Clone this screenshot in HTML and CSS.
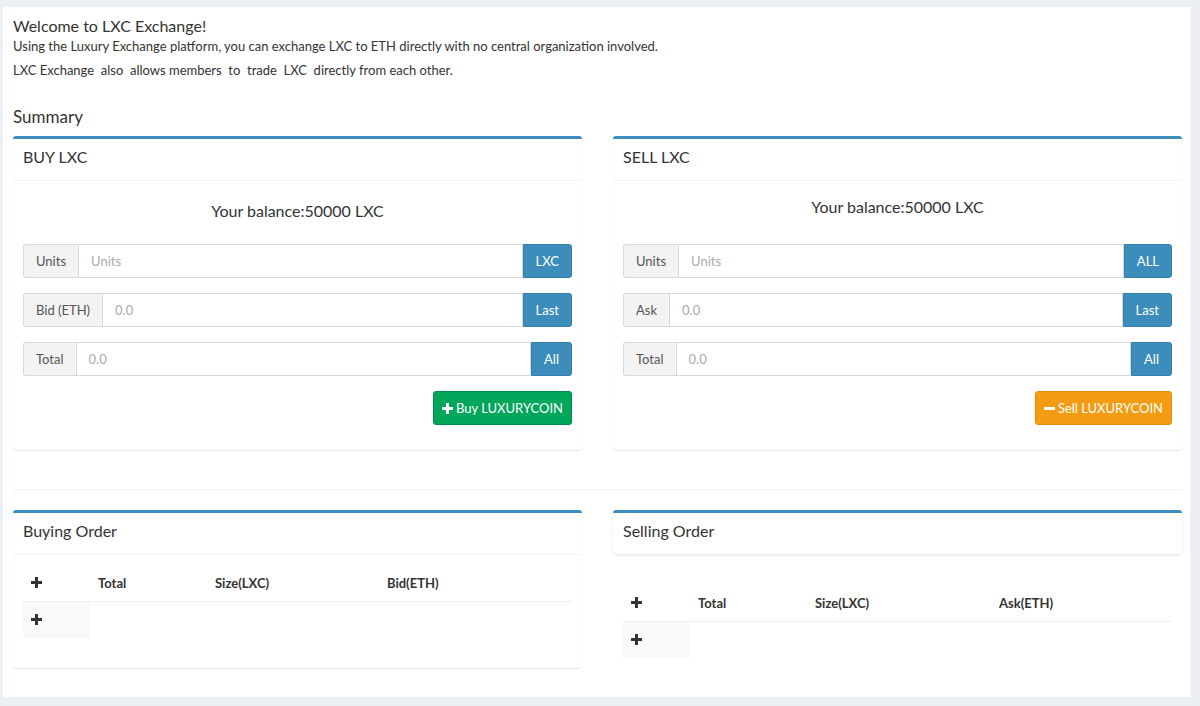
FILE: index.html
```html
<!DOCTYPE html>
<html lang="en">
<head>
  <meta charset="UTF-8" />
  <meta name="viewport" content="width=device-width, initial-scale=1" />
  <title>LXC Exchange</title>
  <link rel="stylesheet" href="styles.css">
</head>
<body>
  <div class="content">
    <h4 class="welcome">Welcome to LXC Exchange!</h4>
    <p class="intro">Using the Luxury Exchange platform, you can exchange LXC to ETH directly with no central organization involved.</p>
    <p class="intro">LXC Exchange &nbsp;also &nbsp;allows members &nbsp;to &nbsp;trade &nbsp;LXC &nbsp;directly from each other.</p>

    <h4 class="section-title">Summary</h4>

    <div class="row">
      <!-- buy side -->
      <div class="box">
        <div class="box-header"><h3>BUY LXC</h3></div>
        <div class="box-body">
          <div class="balance balance-buy">Your balance:50000 LXC</div>
          <div class="input-group">
            <span class="addon">Units</span>
            <input type="text" placeholder="Units">
            <button class="btn-addon">LXC</button>
          </div>
          <div class="input-group">
            <span class="addon">Bid (ETH)</span>
            <input type="text" placeholder="0.0">
            <button class="btn-addon">Last</button>
          </div>
          <div class="input-group">
            <span class="addon">Total</span>
            <input type="text" placeholder="0.0">
            <button class="btn-addon">All</button>
          </div>
          <div class="actions">
            <button class="btn btn-buy">
              <svg width="11" height="11" viewBox="0 0 11 11"><path d="M4 0h3v4h4v3H7v4H4V7H0V4h4z" fill="#fff"/></svg>
              Buy LUXURYCOIN
            </button>
          </div>
        </div>
      </div>

      <!-- sell side -->
      <div class="box">
        <div class="box-header"><h3>SELL LXC</h3></div>
        <div class="box-body">
          <div class="balance">Your balance:50000 LXC</div>
          <div class="input-group">
            <span class="addon">Units</span>
            <input type="text" placeholder="Units">
            <button class="btn-addon">ALL</button>
          </div>
          <div class="input-group">
            <span class="addon">Ask</span>
            <input type="text" placeholder="0.0">
            <button class="btn-addon">Last</button>
          </div>
          <div class="input-group">
            <span class="addon">Total</span>
            <input type="text" placeholder="0.0">
            <button class="btn-addon">All</button>
          </div>
          <div class="actions">
            <button class="btn btn-sell">
              <svg width="11" height="11" viewBox="0 0 11 11"><path d="M0 4h11v3H0z" fill="#fff"/></svg>
              Sell LUXURYCOIN
            </button>
          </div>
        </div>
      </div>
    </div>

    <hr class="divider">

    <div class="row">
      <div class="box">
        <div class="box-header"><h3>Buying Order</h3></div>
        <div class="box-body">
          <table class="orders">
            <thead>
              <tr>
                <th class="ctrl"><svg width="11" height="11" viewBox="0 0 11 11"><path d="M4 0h3v4h4v3H7v4H4V7H0V4h4z" fill="#333"/></svg></th>
                <th class="col-total">Total</th>
                <th class="col-size">Size(LXC)</th>
                <th>Bid(ETH)</th>
              </tr>
            </thead>
            <tbody>
              <tr>
                <td class="ctrl"><svg width="11" height="11" viewBox="0 0 11 11"><path d="M4 0h3v4h4v3H7v4H4V7H0V4h4z" fill="#333"/></svg></td>
                <td></td><td></td><td></td>
              </tr>
            </tbody>
          </table>
        </div>
      </div>

      <div class="col">
        <div class="box box-flat">
          <div class="box-header"><h3>Selling Order</h3></div>
        </div>
        <table class="orders orders-loose">
          <thead>
            <tr>
              <th class="ctrl"><svg width="11" height="11" viewBox="0 0 11 11"><path d="M4 0h3v4h4v3H7v4H4V7H0V4h4z" fill="#333"/></svg></th>
              <th class="col-total">Total</th>
              <th class="col-size">Size(LXC)</th>
              <th>Ask(ETH)</th>
            </tr>
          </thead>
          <tbody>
            <tr>
              <td class="ctrl"><svg width="11" height="11" viewBox="0 0 11 11"><path d="M4 0h3v4h4v3H7v4H4V7H0V4h4z" fill="#333"/></svg></td>
              <td></td><td></td><td></td>
            </tr>
          </tbody>
        </table>
      </div>
    </div>
  </div>
</body>
</html>
```

FILE: styles.css
```css
html,
body {
  margin: 0;
  background-color: #ecf0f5;
}

body {
  padding: 7px 10px 9px 3px;
  font-family: "Lato", "Open Sans", sans-serif;
  font-size: 14px;
  line-height: 1.42857;
  color: #333;
}

.content {
  background-color: #fff;
  padding: 9px 8px 30px 10px;
  height: 651px;
}

.welcome {
  margin: 0;
  font-size: 16px;
  font-weight: 400;
  line-height: 20px;
}

.intro {
  margin: 0 0 4px;
  font-size: 13px;
  line-height: 20px;
}

.section-title {
  margin: 25px 0 7px;
  font-size: 17px;
  font-weight: 400;
  line-height: 24px;
}

.row {
  display: grid;
  grid-template-columns: 569px 569px;
  gap: 31px;
}

/* boxes */
.box {
  background: #fff;
  border-top: 3px solid #3c8dbc;
  border-radius: 3px;
  box-shadow: 0 1px 1px rgba(0, 0, 0, 0.1);
  margin-bottom: 20px;
}

.box-header {
  padding: 7px 10px 13px;
  border-bottom: 1px solid #f4f4f4;
}

.box-header h3 {
  margin: 0;
  font-size: 16px;
  font-weight: 400;
  line-height: 21px;
}

.box-flat {
  box-shadow: 0 1px 3px rgba(0, 0, 0, 0.12);
}

.box-flat .box-header {
  border-bottom: none;
}

.box-body {
  padding: 10px;
}

.balance {
  text-align: center;
  font-size: 16px;
  line-height: 22px;
  margin: 5px 0 26px;
}

.balance-buy {
  margin: 9px 0 22px;
}

/* input rows */
.input-group {
  display: flex;
  height: 34px;
  margin-bottom: 15px;
}

.addon {
  display: flex;
  align-items: center;
  padding: 0 12px;
  background-color: #f3f3f3;
  border: 1px solid #d9d9d9;
  border-right: none;
  border-radius: 3px 0 0 3px;
  color: #555;
  font-size: 13px;
}

.input-group input {
  flex: 1;
  min-width: 0;
  border: 1px solid #d9d9d9;
  padding: 0 12px;
  font-family: inherit;
  font-size: 13px;
  color: #555;
  outline: none;
}

.input-group input::placeholder {
  color: #aaa;
}

.btn-addon {
  background-color: #3c8dbc;
  color: #fff;
  border: 1px solid #367fa9;
  border-radius: 0 3px 3px 0;
  padding: 0 12px;
  font-family: inherit;
  font-size: 13px;
}

.actions {
  display: flex;
  justify-content: flex-end;
  margin-bottom: 15px;
}

.btn {
  display: flex;
  align-items: center;
  gap: 3px;
  height: 34px;
  padding: 0 8px;
  border-radius: 3px;
  color: #fff;
  font-family: inherit;
  font-size: 13px;
  white-space: nowrap;
}

.btn-buy {
  background-color: #00a65a;
  border: 1px solid #008d4c;
}

.btn-sell {
  background-color: #f39c12;
  border: 1px solid #e08e0b;
}

.divider {
  border: none;
  border-top: 1px solid #f1f1f1;
  margin: 19px 0 20px;
}

/* order tables */
.orders {
  width: 100%;
  border-collapse: collapse;
  margin-bottom: 20px;
}

.orders th {
  text-align: left;
  font-weight: 700;
  font-size: 13px;
  padding: 8px;
  line-height: 20px;
  border-bottom: 1px solid #eee;
}

.orders td {
  padding: 8px;
  height: 19px;
}

.orders .ctrl {
  width: 51px;
  padding-left: 8px;
}

.orders td.ctrl {
  background-color: #f9f9f9;
}

.orders .col-total {
  width: 101px;
}

.orders .col-size {
  width: 156px;
}

.orders-loose {
  width: calc(100% - 20px);
  margin: 31px 10px 0;
}

.orders-loose .col-size {
  width: 168px;
}
```
